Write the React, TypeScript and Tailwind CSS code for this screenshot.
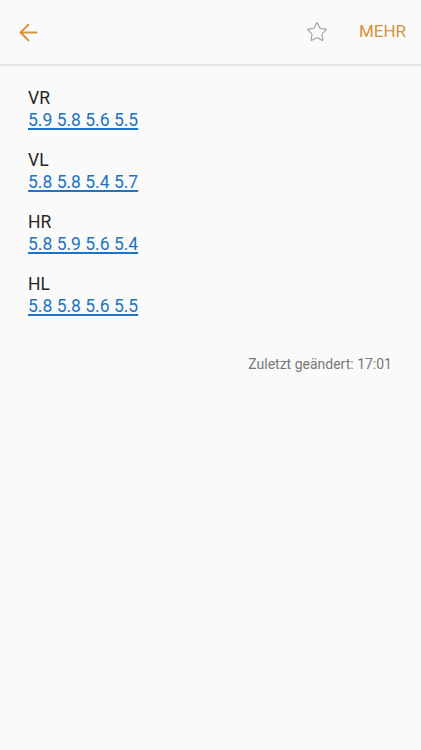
import { ArrowLeft, Star } from "lucide-react";

const rows = [
  { label: "VR", values: "5.9 5.8 5.6 5.5" },
  { label: "VL", values: "5.8 5.8 5.4 5.7" },
  { label: "HR", values: "5.8 5.9 5.6 5.4" },
  { label: "HL", values: "5.8 5.8 5.6 5.5" },
];

export default function App() {
  return (
    <div className="min-h-[750px] bg-[#fafafa]" style={{ fontFamily: "Roboto, 'Noto Sans', sans-serif" }}>
      {/* Toolbar */}
      <header className="h-[66px] flex items-center border-b-2 border-[#e4e4e4] pl-[15px] pr-[15px]">
        <ArrowLeft size={27} strokeWidth={1.8} className="text-[#d9923a]" />
        <div className="ml-auto flex items-center">
          <Star size={22} strokeWidth={1.2} className="text-[#9e9e9e]" />
          <span className="ml-[31px] text-[17px] text-[#d9923a]">MEHR</span>
        </div>
      </header>

      {/* Note body */}
      <main className="pl-[28px] pr-[29px] pt-[21px]">
        <div className="flex flex-col gap-[18px]">
          {rows.map((r) => (
            <div key={r.label} className="text-[17.5px] leading-[22px]">
              <div className="text-[#262626]">{r.label}</div>
              <a className="text-[#1c74c4] underline underline-offset-2 decoration-[1.5px]">{r.values}</a>
            </div>
          ))}
        </div>
        <p className="mt-[37px] text-right text-[14px] text-[#787878]">Zuletzt geändert: 17:01</p>
      </main>
    </div>
  );
}
